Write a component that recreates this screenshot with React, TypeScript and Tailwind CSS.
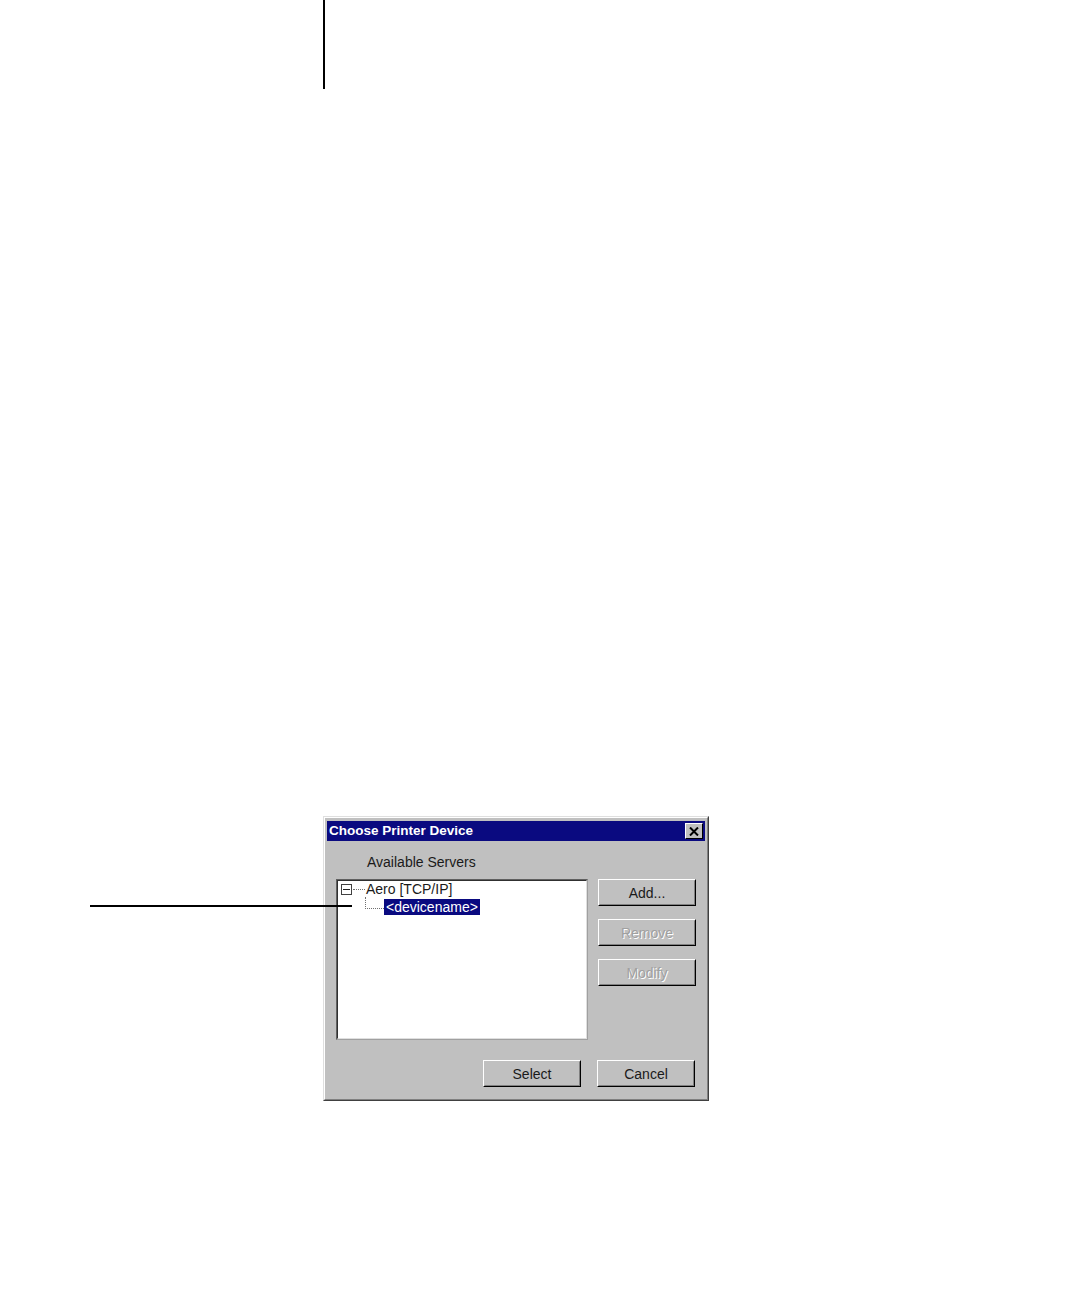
import React from 'react'

const font = { fontFamily: '"Liberation Sans", Arial, sans-serif' }

function Btn({ label, disabled = false }: { label: string; disabled?: boolean }) {
  return (
    <div className="w-[98px] h-[27px] bg-[#c0c0c0] border border-t-white border-l-white border-r-black border-b-black">
      <div className="w-full h-full flex items-center justify-center border border-t-transparent border-l-transparent border-r-[#808080] border-b-[#808080]">
        <span
          className={`text-[14px] leading-none ${disabled ? 'text-[#a0a0a0] [text-shadow:1px_1px_0_#ffffff]' : 'text-[#1a1a1a]'}`}
        >
          {label}
        </span>
      </div>
    </div>
  )
}

export default function App() {
  return (
    <div className="relative w-[1080px] h-[1296px] bg-white overflow-hidden" style={font}>
      {/* margin rule */}
      <div className="ml-[323px] w-[2px] h-[89px] bg-black" />

      {/* callout */}
      <div className="absolute left-[90px] top-[905px] w-[262px] h-[2px] bg-black z-10" />

      {/* dialog */}
      <div className="mt-[727px] ml-[323px] w-[386px] h-[285px] bg-[#c0c0c0] border border-t-[#dfdfdf] border-l-[#dfdfdf] border-r-[#404040] border-b-[#404040]">
        <div className="w-full h-full border border-t-white border-l-white border-r-[#808080] border-b-[#808080] px-[2px] pt-[3px] flex flex-col">
          {/* title bar */}
          <div className="h-[20px] bg-[#0a0a80] flex items-center justify-between pl-[2px] pr-[2px]">
            <span className="text-white font-bold text-[13.5px] leading-none">Choose Printer Device</span>
            <div className="w-[18px] h-[16px] bg-[#c0c0c0] border border-t-white border-l-white border-r-black border-b-black flex items-center justify-center">
              <svg width="10" height="9" viewBox="0 0 10 9">
                <path d="M1 0.5 L9 8.5 M9 0.5 L1 8.5" stroke="#000" strokeWidth="2" />
              </svg>
            </div>
          </div>

          <div className="pl-[40px] pt-[14px] text-[14px] leading-none text-[#1a1a1a]">Available Servers</div>

          <div className="flex pl-[9px] pt-[10px]">
            {/* tree list */}
            <div className="w-[252px] h-[161px] bg-white border border-t-[#606060] border-l-[#606060] border-r-[#a0a0a0] border-b-[#a0a0a0]">
              <div className="w-full h-full border border-t-[#303030] border-l-[#303030] border-r-[#dfdfdf] border-b-[#dfdfdf] pl-[3px]">
                <div className="flex items-center h-[16px]">
                  <div className="w-[11px] h-[11px] border border-[#404040] flex items-center justify-center">
                    <div className="w-[7px] h-[1px] bg-[#202020]" />
                  </div>
                  <div className="w-[12px] border-t border-dotted border-[#707070] ml-[1px]" />
                  <span className="text-[14px] leading-none text-[#1a1a1a] ml-[1px]">Aero [TCP/IP]</span>
                </div>
                <div className="flex items-end h-[18px] pl-[24px]">
                  <div className="w-[19px] h-[12px] border-l border-b border-dotted border-[#707070] mb-[6px]" />
                  <span className="bg-[#0a0a80] text-white text-[14px] leading-none px-[2px] pt-[1px] pb-[2px] h-[16px] flex items-center">
                    &lt;devicename&gt;
                  </span>
                </div>
              </div>
            </div>

            {/* right buttons */}
            <div className="ml-[10px] flex flex-col gap-[13px]">
              <Btn label="Add..." />
              <Btn label="Remove" disabled />
              <Btn label="Modify" disabled />
            </div>
          </div>

          <div className="flex justify-end gap-[16px] pr-[10px] pt-[20px]">
            <Btn label="Select" />
            <Btn label="Cancel" />
          </div>
        </div>
      </div>
    </div>
  )
}
